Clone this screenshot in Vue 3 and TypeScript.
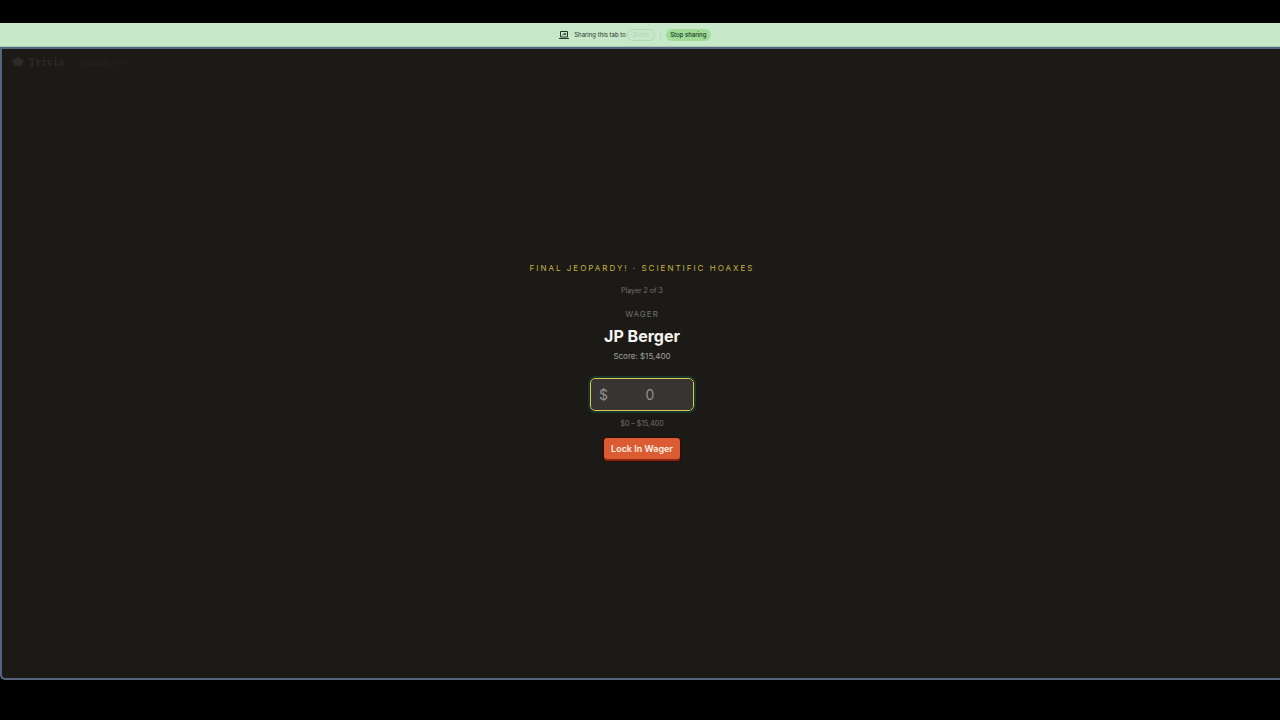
<script setup lang="ts">
import { ref } from 'vue'

const player = { name: 'JP Berger', index: 2, total: 3, score: 15400 }
const category = 'Scientific Hoaxes'
const wager = ref('')
const money = (n: number): string => '$' + n.toLocaleString('en-US')
</script>

<template>
  <div class="screen">
    <div class="share-bar">
      <svg class="share-icon" viewBox="0 0 20 20" aria-hidden="true">
        <path d="M3 3h14v11H3zM0 17h20" fill="none" stroke="currentColor" stroke-width="2" />
        <path d="M6 12c0-3 2-5 5-5V5l4 3-4 3V9c-2 0-4 1-5 3z" fill="currentColor" />
      </svg>
      <span class="share-text">Sharing this tab to</span>
      <button class="target" type="button">Zoom</button>
      <span class="divider"></span>
      <button class="stop" type="button">Stop sharing</button>
    </div>

    <div class="tab">
      <header class="top">
        <svg class="logo" viewBox="0 0 24 20" aria-hidden="true">
          <path d="M7 4a5 4 0 0 1 10 0 5 5 0 0 1 5 8l-3 6H5l-3-6a5 5 0 0 1 5-8z" fill="currentColor" />
        </svg>
        <span class="brand">Trivia</span>
        <span class="sub">Jeopardy Live</span>
      </header>

      <main class="content">
        <p class="category">Final Jeopardy! · {{ category }}</p>
        <p class="count">Player {{ player.index }} of {{ player.total }}</p>
        <label class="wager-label" for="wager">Wager</label>
        <h1 class="name">{{ player.name }}</h1>
        <p class="score">Score: {{ money(player.score) }}</p>
        <div class="field">
          <span class="dollar">$</span>
          <input id="wager" v-model="wager" class="input" type="text" inputmode="numeric" placeholder="0" />
        </div>
        <p class="range">$0 – {{ money(player.score) }}</p>
        <button class="lock" type="button">Lock In Wager</button>
      </main>
    </div>
  </div>
</template>

<style>
body {
  margin: 0;
  background: #000;
}
</style>

<style scoped>
* {
  box-sizing: border-box;
}

.screen {
  display: flex;
  flex-direction: column;
  min-height: 100vh;
  padding: 23px 0 40px;
  background: #000;
  font-family: Inter, "Liberation Sans", sans-serif;
}

p,
h1 {
  margin: 0;
}

.share-bar {
  display: flex;
  align-items: center;
  justify-content: center;
  height: 24px;
  padding-right: 10px;
  background: #c8e8ca;
  border-bottom: 1px solid #a9cbb5;
  color: #243329;
  font-size: 6px;
}

.share-icon {
  width: 10px;
  height: 10px;
  margin-right: 5px;
}

.target,
.stop {
  height: 12px;
  padding: 0;
  border-radius: 6px;
  font: inherit;
  line-height: 10px;
}

.target {
  width: 28px;
  margin-left: 1px;
  border: 1px solid #b2d8b4;
  background: transparent;
  color: #b0d5b2;
}

.divider {
  width: 1px;
  height: 10px;
  margin: 0 5px;
  background: #bcdcbe;
}

.stop {
  width: 45px;
  border: 0;
  background: #a0dc98;
  color: #123618;
  font-weight: 500;
}

.tab {
  display: flex;
  flex: 1;
  flex-direction: column;
  border: 2px solid #56647f;
  border-right: 0;
  border-radius: 0 0 0 5px;
  background: #1c1a17;
}

.top {
  display: flex;
  align-items: center;
  height: 26px;
  padding-left: 10px;
  color: #2c2a28;
}

.logo {
  width: 12px;
  height: 10px;
  margin-right: 4px;
}

.brand {
  width: 51px;
  font: bold 12px "Liberation Serif", serif;
  letter-spacing: 1px;
}

.sub {
  color: #272522;
  font-size: 7px;
}

.content {
  display: flex;
  flex: 1;
  flex-direction: column;
  align-items: center;
  justify-content: center;
  padding: 0 0 32px 2px;
  color: #fff;
}

.category {
  color: #c9b243;
  font-size: 8px;
  line-height: 12px;
  letter-spacing: 2px;
  text-transform: uppercase;
}

.count {
  margin-top: 12px;
  color: #74726f;
  font-size: 7px;
  line-height: 10px;
}

.wager-label {
  margin-top: 12px;
  color: #74726f;
  font-size: 8px;
  line-height: 12px;
  letter-spacing: 1px;
  text-transform: uppercase;
}

.name {
  margin-top: 6px;
  color: #f6f5f2;
  font-size: 16px;
  font-weight: 700;
  line-height: 20px;
}

.score {
  margin-top: 4px;
  color: #a5a39f;
  font-size: 8px;
  line-height: 12px;
}

.field {
  display: flex;
  align-items: center;
  width: 104px;
  height: 33px;
  margin-top: 16px;
  padding: 0 4px 0 8px;
  border: 1px solid #e0c84e;
  border-radius: 5px;
  outline: 2px solid #17372c;
  background: #373431;
}

.dollar {
  width: 12px;
  color: #93918d;
  font-size: 14px;
}

.input {
  flex: 1;
  min-width: 0;
  padding: 0;
  border: 0;
  outline: 0;
  background: transparent;
  color: #fff;
  font: 14px Inter, sans-serif;
  text-align: center;
}

.input::placeholder {
  color: #93918d;
}

.range {
  margin-top: 8px;
  color: #74726f;
  font-size: 7px;
  line-height: 10px;
}

.lock {
  width: 76px;
  height: 21px;
  margin-top: 9px;
  padding: 0;
  border: 0;
  border-radius: 3px;
  background: #db5c33;
  box-shadow: 0 2px 0 #8c2412, 0 1px 0 2px #2a0d09;
  color: #fff0e4;
  font: 600 9px Inter, sans-serif;
}
</style>
